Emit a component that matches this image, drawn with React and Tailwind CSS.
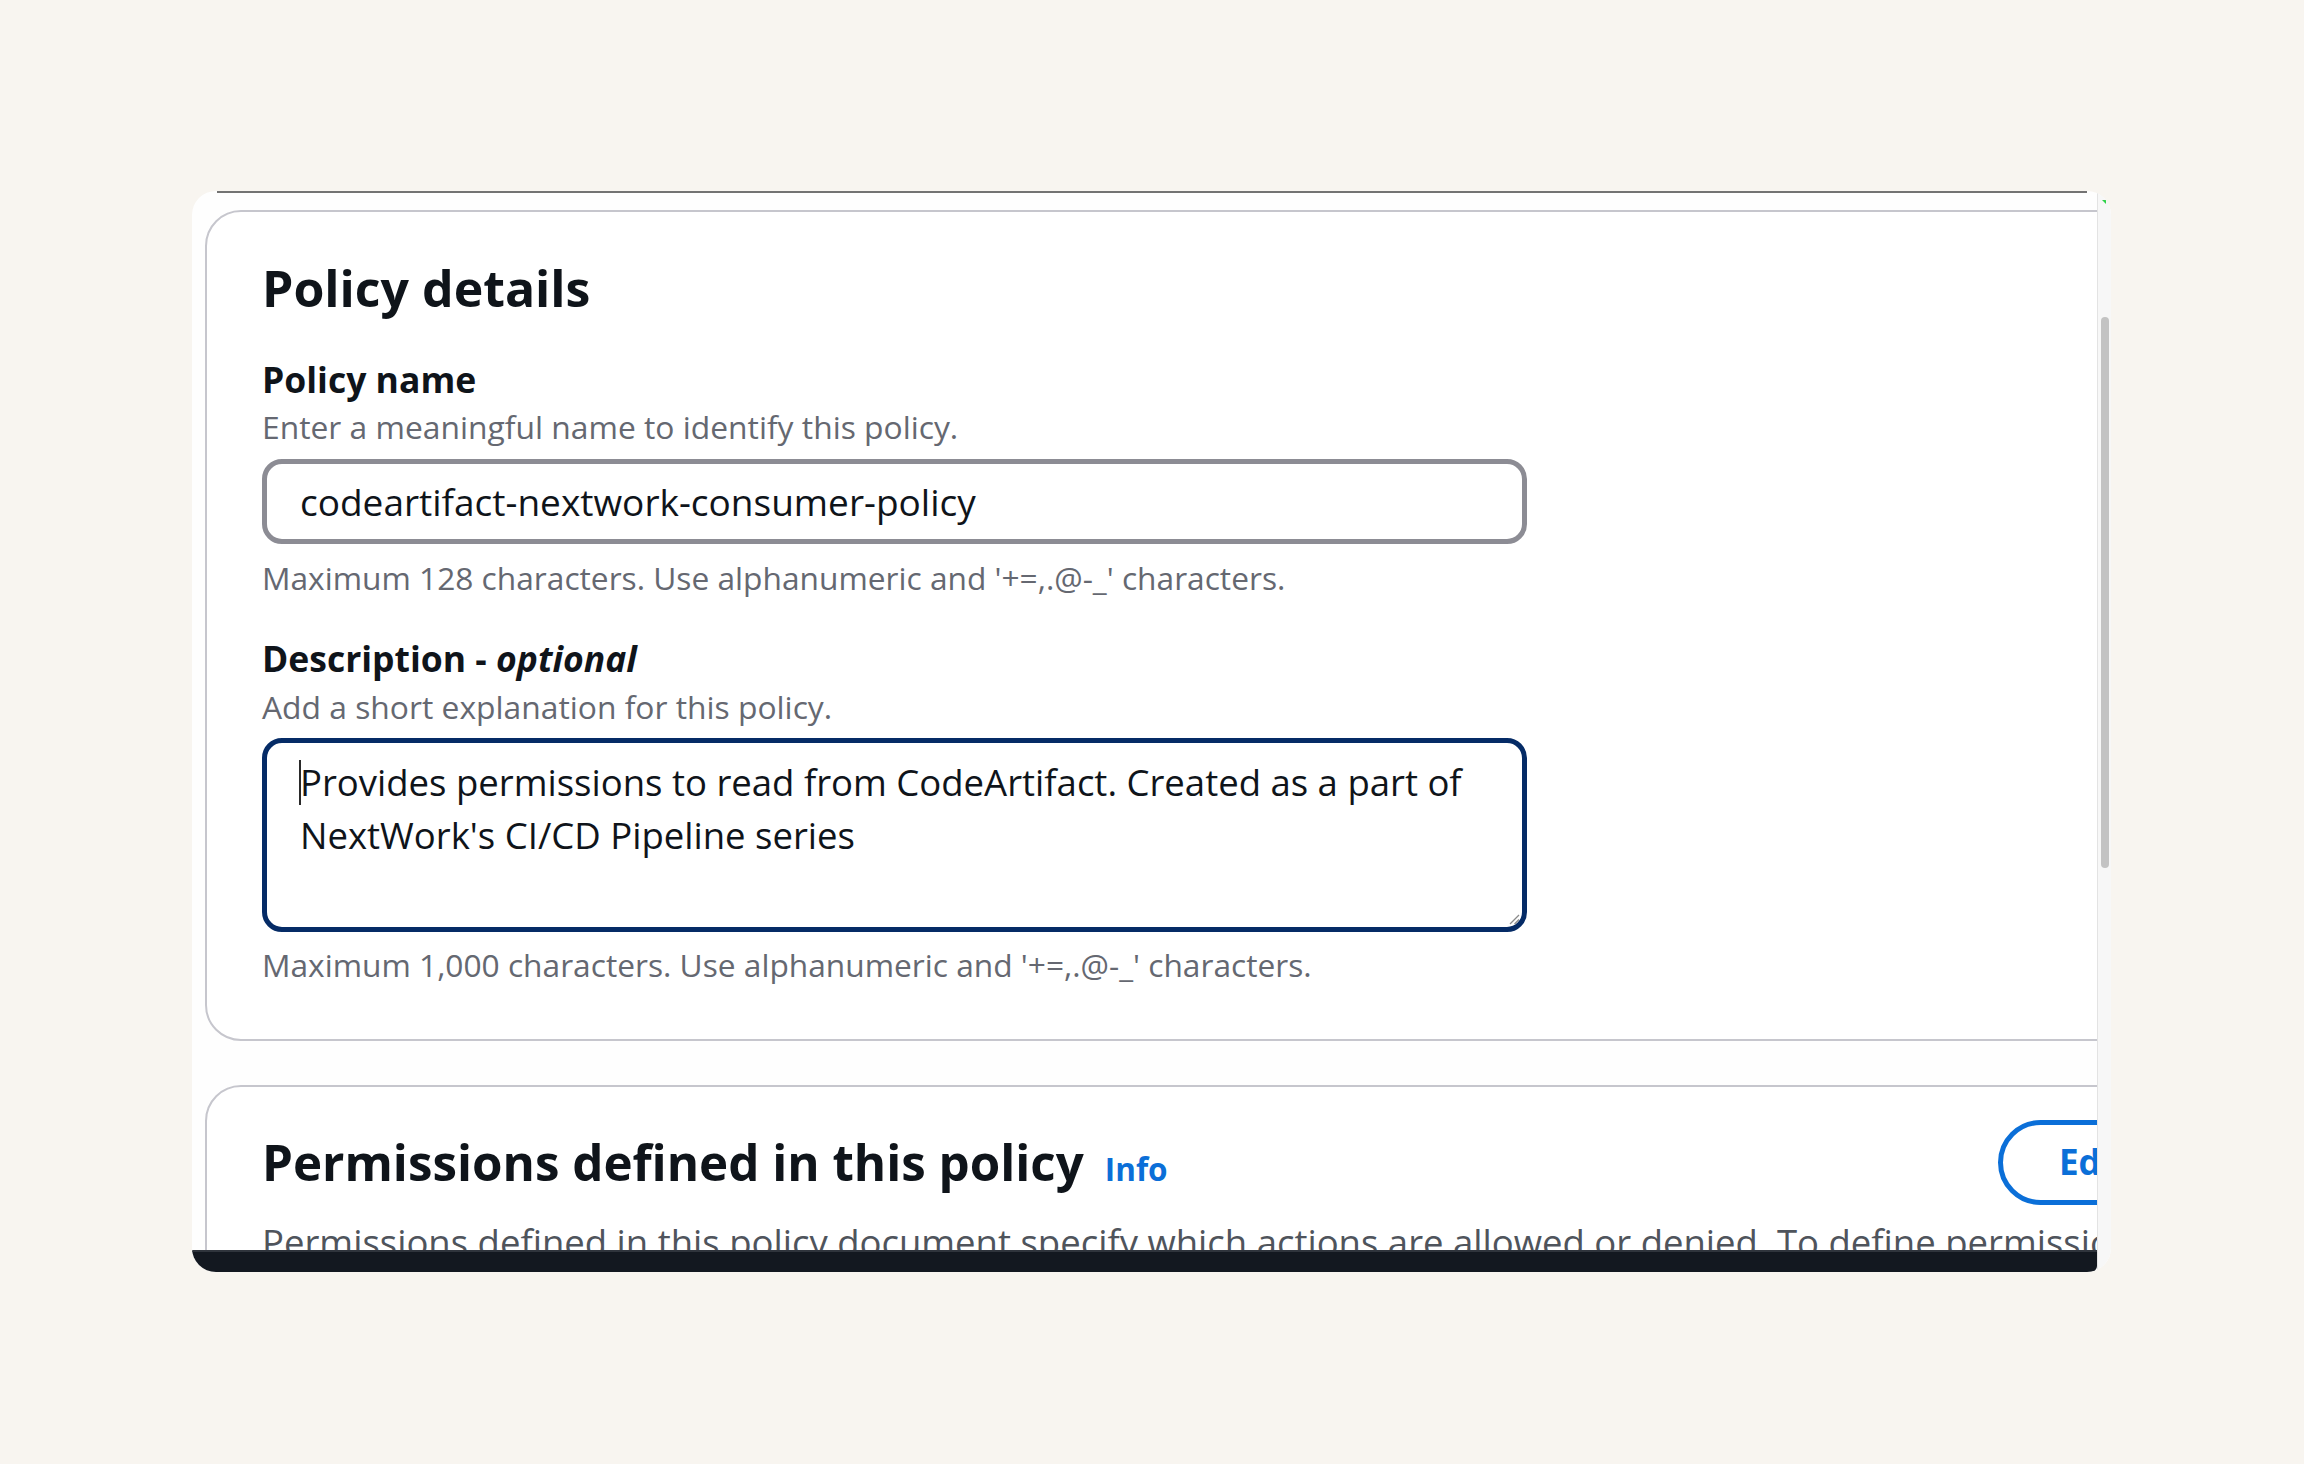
export default function App() {
  const font = { fontFamily: '"Open Sans", "Noto Sans", sans-serif' };
  return (
    <div className="min-h-screen w-full bg-[#f8f5f0] pt-[191px] pl-[192px]" style={font}>
      <div className="flex h-[1081px] w-[1919px] overflow-hidden rounded-[24px] bg-[#fefefe]">
        {/* main column */}
        <div className="flex w-[1905px] flex-col">
          <div className="ml-[25px] mr-[10px] h-[2px] shrink-0 bg-[#737373]" />
          <div className="flex-1 overflow-hidden pl-[13px] pt-[17px]">
            {/* Panel 1 */}
            <div className="w-[2048px] rounded-[36px] border-2 border-[#c6c6cd] bg-white pb-[54px] pl-[55px] pt-[46px]">
              <h2 className="text-[50px] font-bold leading-[60px] text-[#0f141a]">Policy details</h2>

              <div className="mt-[41px] text-[35.5px] font-bold leading-[40px] text-[#0f141a]">Policy name</div>
              <div className="mt-[8px] text-[31.8px] leading-[40px] text-[#656871]">
                Enter a meaningful name to identify this policy.
              </div>
              <div className="mt-[12px] flex h-[85px] w-[1265px] items-center rounded-[20px] border-[5px] border-[#8c8c94] bg-white pl-[33px] text-[37px] text-[#0f141a]">
                codeartifact-nextwork-consumer-policy
              </div>
              <div className="mt-[14px] text-[31.7px] leading-[40px] text-[#656871]">
                Maximum 128 characters. Use alphanumeric and '+=,.@-_' characters.
              </div>

              <div className="mt-[40px] text-[35.5px] font-bold leading-[40px] text-[#0f141a]">
                Description - <span className="italic">optional</span>
              </div>
              <div className="mt-[9px] text-[31.8px] leading-[40px] text-[#656871]">
                Add a short explanation for this policy.
              </div>
              <div className="relative mt-[11px] h-[194px] w-[1265px] rounded-[20px] border-[5px] border-[#052b66] bg-white pl-[33px] pt-[13px] text-[36.5px] leading-[53px] text-[#0f141a]">
                <div className="relative whitespace-nowrap">
                  <span className="absolute left-[-1px] top-[4px] h-[45px] w-[2px] bg-[#2a2a2a]" />
                  Provides permissions to read from CodeArtifact. Created as a part of
                </div>
                <div className="whitespace-nowrap">NextWork's CI/CD Pipeline series</div>
                <svg className="absolute bottom-[2px] right-[2px]" width="12" height="12" viewBox="0 0 12 12">
                  <line x1="11" y1="2" x2="2" y2="11" stroke="#8a8a8a" strokeWidth="1.3" />
                  <line x1="11" y1="6.5" x2="6.5" y2="11" stroke="#8a8a8a" strokeWidth="1.3" />
                </svg>
              </div>
              <div className="mt-[13px] text-[31.7px] leading-[40px] text-[#656871]">
                Maximum 1,000 characters. Use alphanumeric and '+=,.@-_' characters.
              </div>
            </div>

            {/* Panel 2 */}
            <div className="mt-[44px] w-[2048px] rounded-[36px] border-2 border-[#c6c6cd] bg-white pb-[40px] pl-[55px] pr-[53px] pt-[33px]">
              <div className="flex items-center justify-between">
                <div className="flex items-baseline">
                  <h2 className="text-[49.3px] font-bold leading-[60px] text-[#0f141a]">
                    Permissions defined in this policy
                  </h2>
                  <span className="ml-[21px] text-[31.5px] font-bold text-[#0b6fd8]">Info</span>
                </div>
                <div className="flex h-[85px] w-[200px] items-center rounded-full border-[5px] border-[#0b6fd8] pl-[56px] text-[35px] font-bold text-[#0b6fd8]">
                  Edit
                </div>
              </div>
              <div className="mt-[12px] whitespace-nowrap text-[36.5px] leading-[50px] text-[#4f545c]">
                Permissions defined in this policy document specify which actions are allowed or denied. To define permissions for an IAM identity (user, user group, or role), attach a policy to it.
              </div>
            </div>
          </div>
          <div className="h-[22px] shrink-0 rounded-br-[6px] border-t-2 border-[#2f343c] bg-[#131820]" />
        </div>
        {/* scrollbar */}
        <div className="w-[14px] border-l border-[#e3e3e3] bg-[#f7f7f7] pt-[9px]">
          <div className="ml-[4px] h-0 w-0 border-l-[4px] border-t-[4px] border-l-transparent border-t-[#2fd24a]" />
          <div className="ml-[3px] mt-[113px] h-[551px] w-[8px] rounded-full bg-[#c3c3c3]" />
        </div>
      </div>
    </div>
  );
}
